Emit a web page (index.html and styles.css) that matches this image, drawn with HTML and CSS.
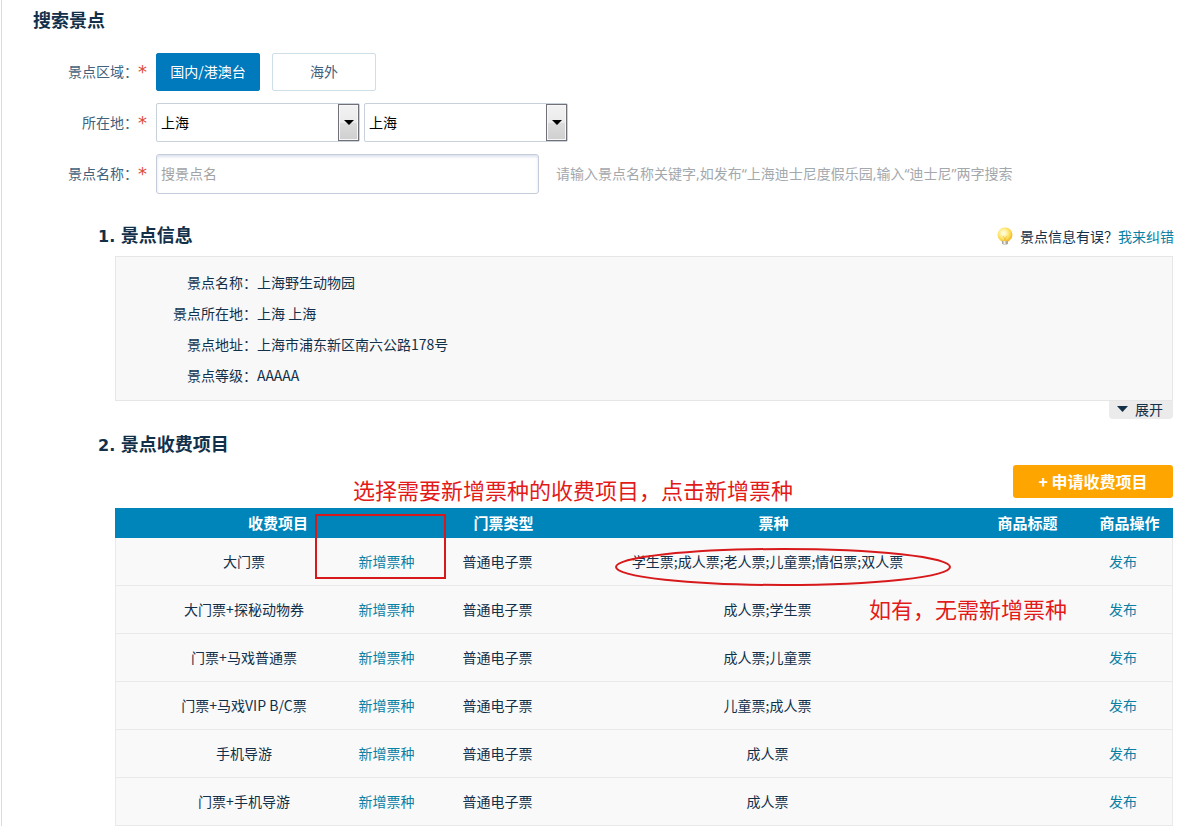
FILE: index.html
```html
<!DOCTYPE html>
<html lang="zh-CN">
<head>
<meta charset="utf-8">
<title>搜索景点</title>
<link rel="stylesheet" href="styles.css">
</head>
<body>
<main class="page">
  <h1 class="title">搜索景点</h1>
  <form class="form">
    <div class="row" role="group" aria-labelledby="area-label">
      <span class="label" id="area-label">景点区域：<span class="req">*</span></span>
      <div class="choices">
        <button type="button" class="choice choice-on">国内/港澳台</button>
        <button type="button" class="choice">海外</button>
      </div>
    </div>
    <div class="row">
      <label class="label" for="province">所在地：<span class="req">*</span></label>
      <div class="selects">
        <div class="select"><select id="province"><option>上海</option></select><span class="drop"><svg width="10" height="5" viewBox="0 0 10 5"><path d="M0 0h10L5 5z"/></svg></span></div>
        <div class="select"><select aria-label="城市"><option>上海</option></select><span class="drop"><svg width="10" height="5" viewBox="0 0 10 5"><path d="M0 0h10L5 5z"/></svg></span></div>
      </div>
    </div>
    <div class="row">
      <label class="label" for="spot">景点名称：<span class="req">*</span></label>
      <input class="text" id="spot" type="text" placeholder="搜景点名">
      <span class="hint">请输入景点名称关键字,如发布“上海迪士尼度假乐园,输入“迪士尼”两字搜索</span>
    </div>
  </form>

  <section class="section">
    <header class="head">
      <h2 class="subtitle"><span class="num">1. </span>景点信息</h2>
      <p class="report">
        <svg class="bulb" width="16" height="18" viewBox="0 0 16 18">
          <defs><radialGradient id="glow" cx="40%" cy="38%" r="62%"><stop offset="0" stop-color="#fffef0"/><stop offset=".4" stop-color="#fff09a"/><stop offset=".75" stop-color="#fcd84c"/><stop offset="1" stop-color="#f0b72c"/></radialGradient></defs>
          <path d="M8 .5a7.3 7.3 0 0 1 4.6 13c-1 .7-1.4 1-1.8 1.5H5.200c-.4-.5-.8-.8-1.800-1.500A7.300 7.300 0 0 1 8 .5z" fill="url(#glow)"/>
          <path d="M6 9l1.500 2v3M10 9l-1.500 2v3" fill="none" stroke="#eebb40" stroke-width=".7"/>
          <path d="M5 14h6v2.500l-1 1H6l-1-1z" fill="#a9a79b"/><path d="M6.500 14h2v3h-2z" fill="#f0efe7"/>
        </svg>
        <span>景点信息有误？</span><a class="link" href="#">我来纠错</a>
      </p>
    </header>
    <div class="info">
      <dl class="list">
        <dt>景点名称：</dt><dd>上海野生动物园</dd>
        <dt>景点所在地：</dt><dd>上海 上海</dd>
        <dt>景点地址：</dt><dd>上海市浦东新区南六公路178号</dd>
        <dt>景点等级：</dt><dd>AAAAA</dd>
      </dl>
    </div>
    <button type="button" class="expand"><svg width="11" height="6" viewBox="0 0 11 6"><path d="M0 0h11L5.500 6z" fill="#12304a"/></svg>展开</button>
  </section>

  <section class="section">
    <h2 class="subtitle"><span class="num">2. </span>景点收费项目</h2>
    <button type="button" class="apply">+ 申请收费项目</button>
    <div class="board">
      <table class="table">
        <colgroup><col class="c-item"><col class="c-add"><col class="c-type"><col><col class="c-title"><col class="c-action"></colgroup>
        <thead><tr><th colspan="2">收费项目</th><th>门票类型</th><th>票种</th><th>商品标题</th><th>商品操作</th></tr></thead>
        <tbody>
          <tr><td>大门票</td><td><a class="link" href="#">新增票种</a></td><td>普通电子票</td><td>学生票;成人票;老人票;儿童票;情侣票;双人票</td><td></td><td><a class="link" href="#">发布</a></td></tr>
          <tr><td>大门票+探秘动物券</td><td><a class="link" href="#">新增票种</a></td><td>普通电子票</td><td>成人票;学生票</td><td></td><td><a class="link" href="#">发布</a></td></tr>
          <tr><td>门票+马戏普通票</td><td><a class="link" href="#">新增票种</a></td><td>普通电子票</td><td>成人票;儿童票</td><td></td><td><a class="link" href="#">发布</a></td></tr>
          <tr><td>门票+马戏VIP B/C票</td><td><a class="link" href="#">新增票种</a></td><td>普通电子票</td><td>儿童票;成人票</td><td></td><td><a class="link" href="#">发布</a></td></tr>
          <tr><td>手机导游</td><td><a class="link" href="#">新增票种</a></td><td>普通电子票</td><td>成人票</td><td></td><td><a class="link" href="#">发布</a></td></tr>
          <tr><td>门票+手机导游</td><td><a class="link" href="#">新增票种</a></td><td>普通电子票</td><td>成人票</td><td></td><td><a class="link" href="#">发布</a></td></tr>
        </tbody>
      </table>
      <p class="note note-pick">选择需要新增票种的收费项目，点击新增票种</p>
      <span class="mark-box"></span>
      <svg class="mark-oval" width="338" height="40" viewBox="0 0 338 40"><ellipse cx="169" cy="20" rx="167" ry="18" fill="none" stroke="#d8191b" stroke-width="2"/></svg>
      <p class="note note-skip">如有，无需新增票种</p>
    </div>
  </section>
</main>
</body>
</html>
```
FILE: styles.css
```css
* { box-sizing: border-box; }
body {
  margin: 0;
  background: #fff;
  color: #12304a;
  font: 14px/20px "Noto Sans CJK SC", sans-serif;
}
h1, h2, p, dl, dd { margin: 0; }
button, input, select { font: inherit; color: inherit; }
button { cursor: pointer; }
a { text-decoration: none; }

.page {
  margin-left: 1px;
  padding: 7px 7px 0 31px;
  border-left: 1px solid #cfdfec;
}
.title, .subtitle { font-size: 18px; line-height: 24px; font-weight: 700; }
.num { font: 700 16px/24px "DejaVu Sans", sans-serif; white-space: pre; }
.link { color: #0a80a4; }

.form { display: flex; flex-direction: column; gap: 12px; margin-top: 22px; }
.row { display: flex; align-items: center; }
.label {
  display: flex;
  justify-content: flex-end;
  flex: none;
  width: 123px;
  padding-right: 9px;
  color: #41617c;
}
.req { width: 9px; color: #e04b35; font: 18px/22px "DejaVu Sans", sans-serif; }
.choices { display: flex; gap: 12px; }
.choice {
  width: 104px;
  height: 38px;
  padding: 0 0 2px;
  border: 1px solid #cfdfea;
  border-radius: 2px;
  background: #fff;
  color: #41617c;
}
.choice-on { border-color: #0079bd; background: #0079bd; color: #fff; }
.selects { display: flex; gap: 4px; }
.select { position: relative; width: 204px; }
.select select {
  display: block;
  width: 100%;
  height: 39px;
  padding: 0 26px 2px 4px;
  border: 1px solid #c8d0da;
  border-radius: 2px;
  background: #fff;
  color: #000;
  appearance: none;
}
.drop {
  position: absolute;
  top: 1px;
  right: 1px;
  bottom: 1px;
  display: flex;
  align-items: center;
  justify-content: center;
  width: 21px;
  border: 1px solid #707078;
  background: linear-gradient(#f2f2f2, #ebebeb 50%, #dcdcdc 51%, #cfcfcf);
  box-shadow: inset 0 0 0 1px #f8f8f8;
  pointer-events: none;
}
.text {
  width: 383px;
  height: 40px;
  padding: 0 4px 2px;
  border: 1px solid #c4ccdb;
  border-radius: 3px;
  background: #fff;
  box-shadow: inset 0 2px 3px #dde3ee;
}
.text::placeholder { color: #a3a3a3; opacity: 1; }
.hint { margin-left: 17px; color: #a3a8ad; font-family: "Noto Sans", "Noto Sans CJK SC", sans-serif; }

.section { display: flex; flex-direction: column; margin-left: 82px; }
.form + .section { margin-top: 28px; }
.section .subtitle { margin-left: -17px; }
.head { display: flex; justify-content: space-between; align-items: center; }
.report { display: flex; align-items: center; margin-right: -1px; }
.bulb { margin-right: 7px; }
.info { margin-top: 7px; padding: 10px 0 9px; border: 1px solid #e6e6e6; background: #f8f8f8; }
.list { display: grid; grid-template-columns: 141px 1fr; line-height: 31px; }
.list dt { text-align: right; }
.expand {
  display: flex;
  align-items: center;
  align-self: flex-end;
  gap: 7px;
  width: 64px;
  height: 18px;
  padding: 0 0 2px 8px;
  border: 0;
  border-radius: 0 0 4px 4px;
  background: #ebebeb;
}
.section + .section { margin-top: 12px; }
.apply {
  align-self: flex-end;
  width: 160px;
  height: 33px;
  margin-top: 7px;
  padding: 0 0 2px;
  border: 0;
  border-radius: 3px;
  background: #ffa500;
  color: #fff;
  font-size: 16px;
  font-weight: 700;
}
.board { position: relative; margin-top: 10px; }
.table { width: 100%; table-layout: fixed; border-collapse: separate; border-spacing: 0; text-align: center; }
.c-item { width: 229px; }
.c-add { width: 97px; }
.c-type { width: 125px; }
.c-title { width: 93px; }
.c-action { width: 99px; }
.table th { height: 30px; padding: 0; background: #0085ba; color: #fff; font-size: 15px; font-weight: 700; }
.table td { height: 48px; padding: 0 12px 2px 0; border-bottom: 1px solid #e9e9e9; background: #f9f9f9; }
.table td:first-child { padding-left: 40px; border-left: 1px solid #e9e9e9; }
.table td:last-child { border-right: 1px solid #e9e9e9; }
.table th:last-child, .table td:last-child { padding-left: 12px; }

.note { position: absolute; color: #e31a1a; font-size: 22px; line-height: 32px; white-space: nowrap; }
.note-pick { top: -35px; left: 238px; }
.note-skip { top: 84px; left: 754px; }
.mark-box { position: absolute; top: 6px; left: 200px; width: 131px; height: 65px; border: 2px solid #d8191b; }
.mark-oval { position: absolute; top: 39px; left: 499px; }
```
